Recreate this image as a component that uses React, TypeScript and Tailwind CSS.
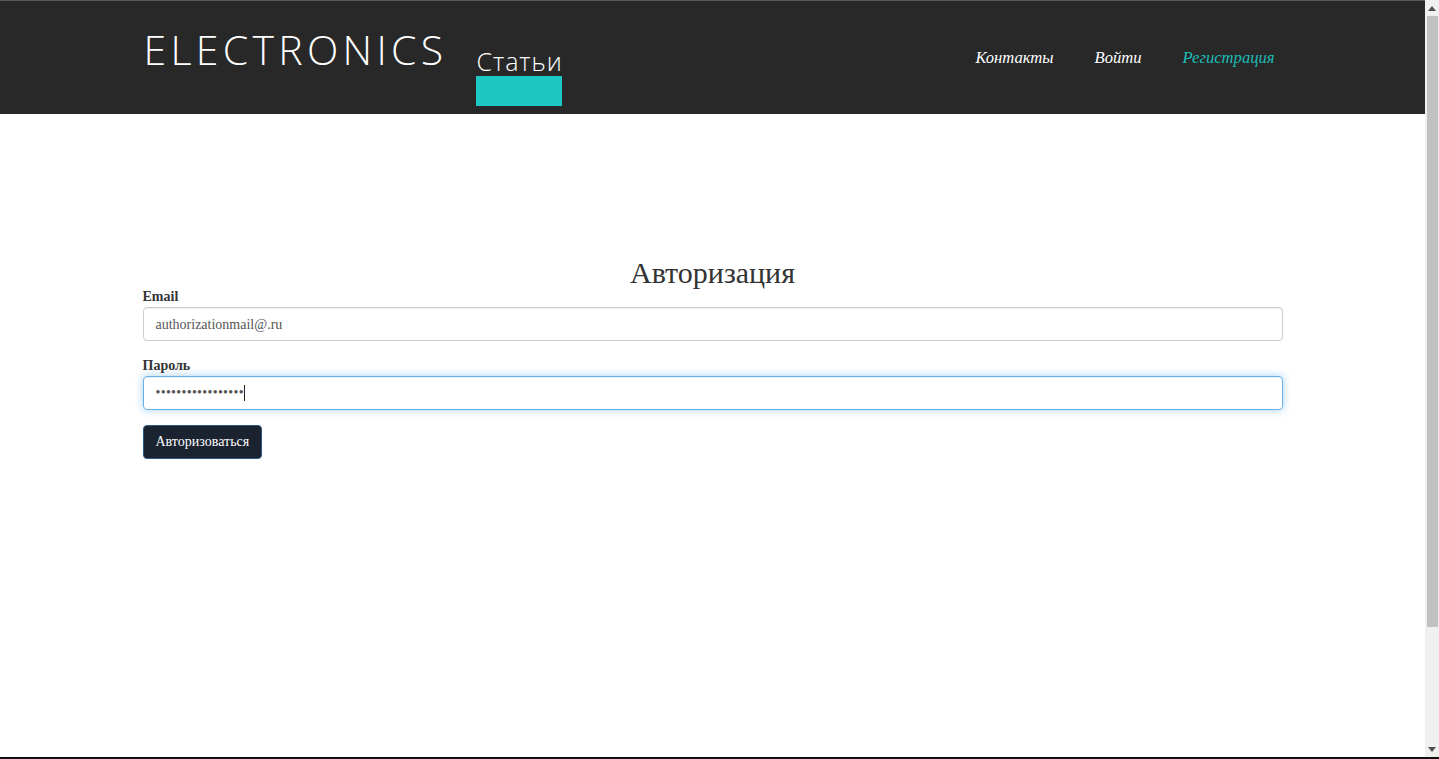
import React from 'react'

const SERIF = "font-['Liberation_Serif','Times_New_Roman',serif]"
const SANS = "font-['Open_Sans','Noto_Sans',sans-serif]"

function Header() {
  return (
    <div className="shrink-0">
      <div className="h-px bg-[#5a5a5a]" />
      <header className="h-[113px] bg-[#282828]">
        <div className="mx-auto flex h-full w-[1140px] items-start">
          <div className={`${SANS} pl-[1px] pt-[28px] text-[41px] font-light leading-[41px] tracking-[4.3px] text-white`}>
            ELECTRONICS
          </div>
          <div className="ml-[29px] flex w-[86px] flex-col pt-[48px]">
            <span className={`${SANS} h-[24px] text-center text-[25px] font-light leading-[24px] tracking-[1px] text-white`}>Статьи</span>
            <span className="mt-[3px] h-[30px] bg-[#1dc8c4]" />
          </div>
          <nav className={`${SERIF} ml-auto flex gap-[41px] pr-[8px] pt-[47px] text-[16.6px] italic leading-[20px]`}>
            <a className="text-white">Контакты</a>
            <a className="text-white">Войти</a>
            <a className="text-[#1dbdb9]">Регистрация</a>
          </nav>
        </div>
      </header>
    </div>
  )
}

function LoginForm() {
  return (
    <main className={`${SERIF} mx-auto w-[1140px] pt-[142px] text-[14px] text-[#333]`}>
      <h2 className="h-[31px] text-center text-[30px] leading-[33px]">Авторизация</h2>

      <label className="block h-[20px] font-bold leading-[20px]">Email</label>
      <div className="flex h-[34px] items-center rounded-[4px] border border-[#ccc] px-[12px] text-[#555] shadow-[inset_0_1px_1px_rgba(0,0,0,0.075)]">
        authorizationmail@.ru
      </div>

      <label className="mt-[15px] block h-[20px] font-bold leading-[20px]">Пароль</label>
      <div className="flex h-[34px] items-center rounded-[4px] border border-[#66afe9] px-[12px] text-[#555] shadow-[inset_0_1px_1px_rgba(0,0,0,0.075),0_0_8px_rgba(102,175,233,0.6)]">
        <span className="leading-[20px] tracking-[0.3px]">•••••••••••••••••</span>
        <span className="h-[16px] w-px bg-[#222]" />
      </div>

      <button className="mt-[15px] h-[34px] rounded-[4px] border border-[#2c5a87] bg-[#1b2330] px-[12px] leading-[20px] text-white">
        Авторизоваться
      </button>
    </main>
  )
}

function Scrollbar() {
  return (
    <div className="flex w-[14px] shrink-0 flex-col bg-[#f0f0f0]">
      <div className="flex h-[16px] items-center justify-center">
        <svg width="8" height="5" viewBox="0 0 8 5"><path d="M0 5 L4 0 L8 5 Z" fill="#505050" /></svg>
      </div>
      <div className="ml-[2px] mr-[1px] h-[611px] bg-[#c1c1c1]" />
      <div className="flex-1" />
      <div className="flex h-[16px] items-center justify-center">
        <svg width="8" height="5" viewBox="0 0 8 5"><path d="M0 0 L8 0 L4 5 Z" fill="#505050" /></svg>
      </div>
    </div>
  )
}

export default function App() {
  return (
    <div className="flex h-[759px] w-[1439px] flex-col overflow-hidden bg-white">
      <div className="flex min-h-0 flex-1">
        <div className="flex min-w-0 flex-1 flex-col">
          <Header />
          <LoginForm />
        </div>
        <Scrollbar />
      </div>
      <div className="h-[2px] shrink-0 bg-[#111]" />
    </div>
  )
}
